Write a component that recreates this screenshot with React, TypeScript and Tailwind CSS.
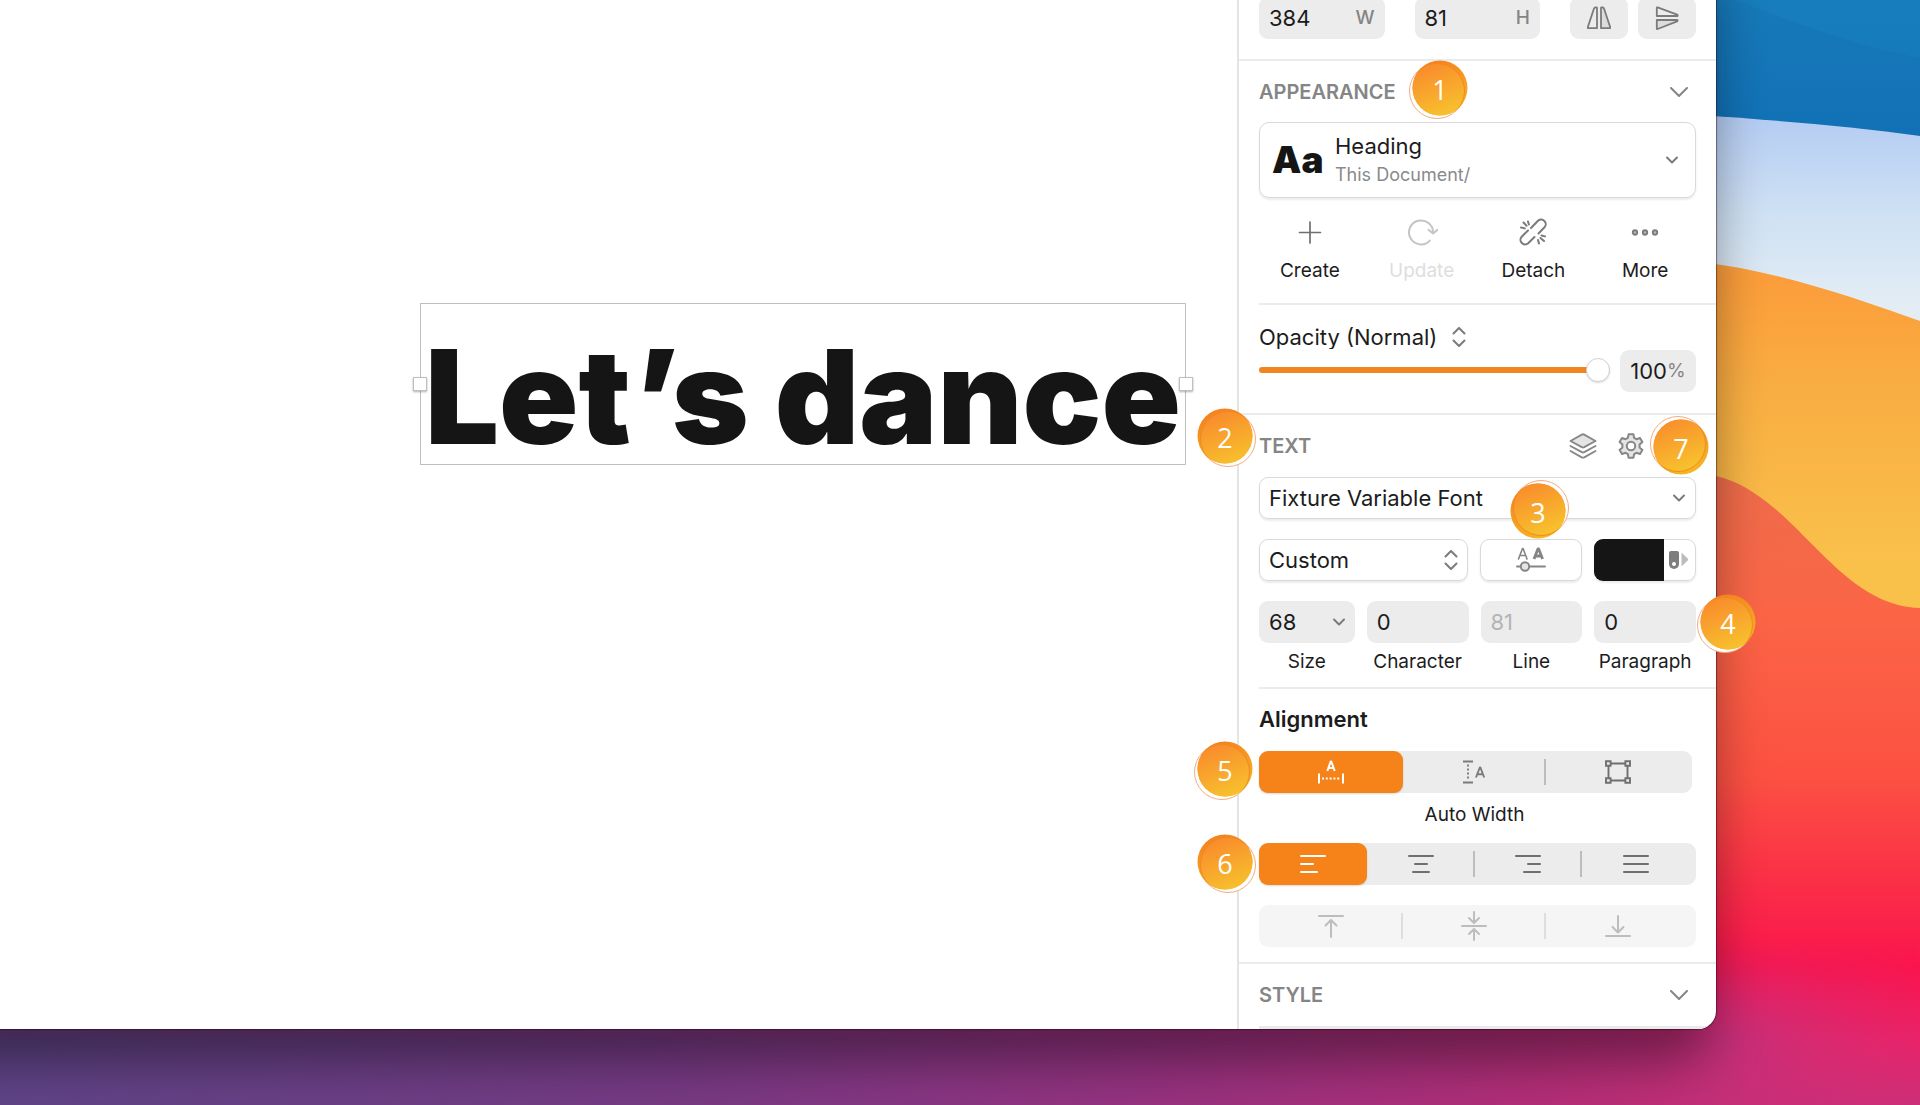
import { useState, ReactNode } from "react"

interface IconProps {
  className?: string
}

function Chevron({ className = "w-[18px] h-[10px]" }: IconProps) {
  return (
    <svg viewBox="0 0 18 10" className={className} fill="none" stroke="currentColor" strokeWidth="2" strokeLinecap="round" strokeLinejoin="round">
      <path d="M1 1l8 8 8-8" />
    </svg>
  )
}

function SmallChevron({ className = "" }: IconProps) {
  return (
    <svg viewBox="0 0 12 8" className={`w-3 h-2 ${className}`} fill="none" stroke="currentColor" strokeWidth="2" strokeLinecap="round" strokeLinejoin="round">
      <path d="M1 1.5l5 5 5-5" />
    </svg>
  )
}

function UpDown({ className = "" }: IconProps) {
  return (
    <svg viewBox="0 0 14 20" className={`w-[14px] h-5 ${className}`} fill="none" stroke="currentColor" strokeWidth="2" strokeLinecap="round" strokeLinejoin="round">
      <path d="M1.5 6.5L7 1l5.500 5.500M1.500 13.500L7 19l5.500-5.500" />
    </svg>
  )
}

function FlipHorizontal() {
  return (
    <svg viewBox="0 0 24 24" className="w-6 h-6" fill="none" stroke="#7b7b7b" strokeWidth="1.800" strokeLinejoin="round">
      <path d="M10 1.800v20.400H1.200c-.5 0-.6-.4-.5-.8L7 2.500c.4-1.200 3-1.500 3-.7z" />
      <path d="M14 1.800v20.400h8.800c.5 0 .6-.4.5-.8L17 2.500c-.4-1.200-3-1.500-3-.7z" fill="#dcdcdc" />
    </svg>
  )
}

function FlipVertical() {
  return (
    <svg viewBox="0 0 24 24" className="w-6 h-6" fill="none" stroke="#7b7b7b" strokeWidth="1.800" strokeLinejoin="round">
      <path d="M1.800 10h20.400c.7 0 .6-1-.1-1.300L2.600 1.300c-.6-.2-.8.100-.8.600z" />
      <path d="M1.800 14h20.400c.7 0 .6 1-.1 1.300L2.600 23c-.6.200-.8-.1-.8-.6z" fill="#dcdcdc" />
    </svg>
  )
}

function PlusIcon() {
  return (
    <svg viewBox="0 0 28 28" className="w-7 h-7" fill="none" stroke="#6f6f6f" strokeWidth="1.700" strokeLinecap="round">
      <path d="M14 4v21M3.500 14.500h21" />
    </svg>
  )
}

function UpdateIcon() {
  return (
    <svg viewBox="0 0 32 28" className="w-8 h-7" fill="none" stroke="#c4c4c4" strokeWidth="2" strokeLinecap="round" strokeLinejoin="round">
      <path d="M23.800 22.600A12 12 0 1 1 27 14.800M22.500 11.800l4.500 3.700 4.500-3.700" />
    </svg>
  )
}

function DetachIcon() {
  return (
    <svg viewBox="0 0 28 28" className="w-7 h-7" fill="none" stroke="#7b7b7b" strokeWidth="2" strokeLinecap="round" strokeLinejoin="round">
      <path d="M12 10l7-7.200a4.600 4.600 0 0 1 6.500 6.500l-6 6.200" />
      <path d="M9 12.500l-6.300 6.200a4.600 4.600 0 0 0 6.500 6.500L15.500 19" />
      <path d="M9 3.500l.9 3M4.500 4.500l3 3.200M2 9.500l3.800.9M19 22l1 3.500M21.500 20l3.500 3M22.500 17.500l3.500.9" />
    </svg>
  )
}

function MoreIcon() {
  return (
    <svg viewBox="0 0 28 28" className="w-7 h-7" fill="#b5b5b5" stroke="#7b7b7b" strokeWidth="1.900">
      <circle cx="4" cy="14.500" r="2.200" />
      <circle cx="14" cy="14.500" r="2.200" />
      <circle cx="24" cy="14.500" r="2.200" />
    </svg>
  )
}

function LayersIcon() {
  return (
    <svg viewBox="0 0 28 26" className="w-7 h-[26px]" fill="none" stroke="#878787" strokeWidth="1.900" strokeLinecap="round" strokeLinejoin="round">
      <path d="M1.500 8L12.800 1.600q1.200-.6 2.400 0L26.500 8l-11.300 6.200q-1.200.6-2.400 0z" fill="#e4e4e4" />
      <path d="M1.500 13l11.300 6.200q1.200.6 2.400 0L26.500 13M1.500 18l11.300 6.300q1.200.6 2.400 0L26.500 18" />
    </svg>
  )
}

function GearIcon() {
  return (
    <svg viewBox="0 0 26 26" className="w-[26px] h-[26px]" fill="#e4e4e4" stroke="#878787" strokeWidth="2" strokeLinejoin="round">
      <path d="M10.600 1.200h4.800l.7 3.600 2.400 1.400 3.500-1.200 2.400 4.100-2.800 2.500v2.800l2.800 2.500-2.400 4.100-3.500-1.200-2.400 1.400-.7 3.600h-4.800l-.7-3.600-2.400-1.400L4 21l-2.400-4.100 2.800-2.500v-2.800L1.600 9.100 4 5l3.500 1.200 2.400-1.400z" />
      <circle cx="13" cy="13" r="4.200" fill="#fff" />
    </svg>
  )
}

function VariableAxesIcon() {
  return (
    <svg viewBox="0 0 30 26" className="w-[30px] h-[26px]" fill="none" stroke="#858585" strokeLinecap="round" strokeLinejoin="round">
      <path d="M2.500 12L6.500 1.500h.6L11 12M4 8.500h5.600" strokeWidth="1.600" />
      <path d="M18 12L21.900 2h.8L26.600 12M19.600 9h5.500" strokeWidth="2.800" strokeLinecap="butt" />
      <path d="M1 19.500h28" strokeWidth="1.900" />
      <circle cx="9" cy="19.500" r="4.200" fill="#e4e4e4" strokeWidth="2" />
    </svg>
  )
}

function SwatchIcon() {
  return (
    <svg viewBox="0 0 20 18" className="w-5 h-[18px]">
      <path d="M0 2a2 2 0 0 1 2-2h6a2 2 0 0 1 2 2v11a5 5 0 0 1-10 0z" fill="#7e7e7e" />
      <circle cx="5" cy="13" r="2" fill="#fff" />
      <path d="M12.500 1.500l6.200 6q1 1 0 2l-6.200 6z" fill="#bcbcbc" />
    </svg>
  )
}

function AutoWidthIcon() {
  return (
    <svg viewBox="0 0 26 24" className="w-[26px] h-6" fill="none" stroke="#fff" strokeWidth="2" strokeLinejoin="round">
      <path d="M9.300 11L12.700 1.500h.6l3.400 9.500M10.500 8h5" />
      <path d="M1 13.500v10M25 13.500v10" />
      <path d="M4 18.500h19" strokeDasharray="2 1.800" />
    </svg>
  )
}

function AutoHeightIcon() {
  return (
    <svg viewBox="0 0 22 24" className="w-[22px] h-6" fill="none" stroke="#7b7b7b" strokeWidth="1.900" strokeLinejoin="round">
      <path d="M0 1.500h10M0 22.500h10" />
      <path d="M5 4.500v16" strokeDasharray="2 2" />
      <path d="M13 17.500L16.800 7.500h.6l3.800 10M14.300 14.200h5.600" />
    </svg>
  )
}

function FixedSizeIcon() {
  return (
    <svg viewBox="0 0 26 24" className="w-[26px] h-6" fill="none" stroke="#6f6f6f" strokeWidth="1.900">
      <path d="M5.500 3.500h15M5.500 20.500h15M3.500 5.500v13M22.500 5.500v13" />
      <path d="M1 1.200h4.600v4.600H1zM20.400 1.200H25v4.600h-4.600zM1 18.200h4.600v4.600H1zM20.400 18.200H25v4.600h-4.600z" />
    </svg>
  )
}

function LinesIcon({ d }: { d: string }) {
  return (
    <svg viewBox="0 0 26 20" className="w-[26px] h-5" fill="none" stroke="currentColor" strokeWidth="2" strokeLinecap="round">
      <path d={d} />
    </svg>
  )
}

function VerticalIcon({ d }: { d: string }) {
  return (
    <svg viewBox="0 0 26 30" className="w-[26px] h-[30px]" fill="none" stroke="#bdbdbd" strokeWidth="2" strokeLinecap="round" strokeLinejoin="round">
      <path d={d} />
    </svg>
  )
}

const horizontalOptions = [
  { label: "Left", d: "M1 2h24M1 10h12M1 18h16" },
  { label: "Center", d: "M1 2h24M7 10h12M5 18h16" },
  { label: "Right", d: "M1 2h24M13 10h12M9 18h16" },
  { label: "Justify", d: "M1 2h24M1 10h24M1 18h24" },
]

const verticalOptions = [
  { label: "Top", d: "M1 5h24M13 26V9M7.500 14.500L13 9l5.500 5.500" },
  { label: "Middle", d: "M1 15h24M13 1v10.500M8 7l5 5 5-5M13 29V18.500M8 23l5-5 5 5" },
  { label: "Bottom", d: "M1 25h24M13 5v16.500M7.500 16l5.500 5.500 5.500-5.500" },
]

// the ring peeks out on a different side of each pin
const pins = [
  { n: 1, place: "top-[56px] right-[244px]", ring: [-3, 3] },
  { n: 2, place: "top-[404px] right-[459px]", ring: [3, 3] },
  { n: 3, place: "top-[479px] right-[146px]", ring: [3, -3] },
  { n: 4, place: "top-[590px] -right-[44px]", ring: [-3, 3] },
  { n: 5, place: "top-[737px] right-[459px]", ring: [-3, 3] },
  { n: 6, place: "top-[830px] right-[459px]", ring: [3, 3] },
  { n: 7, place: "top-[415px] right-[3px]", ring: [-3, -3] },
]

interface PinProps {
  n: number
  place: string
  ring: number[]
}

function Pin({ n, place, ring }: PinProps) {
  return (
    <div className={`absolute ${place} w-16 h-16 flex items-center justify-center`}>
      <svg viewBox="0 0 64 64" className="absolute inset-0 w-16 h-16">
        <defs>
          <linearGradient id={`pin${n}`} x1="0.3" y1="0" x2="0.7" y2="1">
            <stop offset="0" stopColor="#f98a2c" />
            <stop offset="1" stopColor="#f7c52d" />
          </linearGradient>
          <linearGradient id={`rim${n}`} x1="0.3" y1="0" x2="0.7" y2="1">
            <stop offset="0" stopColor="#f5801f" />
            <stop offset="1" stopColor="#f6b822" />
          </linearGradient>
          <clipPath id={`clip${n}`}>
            <circle cx="32" cy="32" r="27.500" />
          </clipPath>
        </defs>
        <circle cx={32 + ring[0]} cy={32 + ring[1]} r="27.500" fill="#fff" stroke="#f3ab80" strokeWidth="1" />
        <circle cx="32" cy="32" r="27.500" fill={`url(#rim${n})`} />
        <circle cx={32 + ring[0]} cy={32 + ring[1]} r="27.500" fill={`url(#pin${n})`} stroke="#ee8a22" strokeWidth="1" clipPath={`url(#clip${n})`} />
      </svg>
      <span className="relative pt-1 font-['Open_Sans'] text-[27px] leading-8 text-white">{n}</span>
    </div>
  )
}

function Wallpaper() {
  return (
    <svg viewBox="0 0 1920 1105" preserveAspectRatio="xMaxYMax slice" className="absolute inset-0 w-full h-full" aria-hidden="true">
      <defs>
        <linearGradient id="sky" x1="0" y1="0" x2="0" y2="1">
          <stop offset="0" stopColor="#1779b9" />
          <stop offset="1" stopColor="#0f6db4" />
        </linearGradient>
        <linearGradient id="mist" gradientUnits="userSpaceOnUse" x1="0" y1="120" x2="0" y2="310">
          <stop offset="0" stopColor="#b5cdf3" />
          <stop offset="0.500" stopColor="#cfe1f4" />
          <stop offset="1" stopColor="#e4edf4" />
        </linearGradient>
        <linearGradient id="sand" gradientUnits="userSpaceOnUse" x1="0" y1="280" x2="0" y2="560">
          <stop offset="0" stopColor="#fb9d3b" />
          <stop offset="0.400" stopColor="#f9ae42" />
          <stop offset="1" stopColor="#f9c04a" />
        </linearGradient>
        <linearGradient id="fire" gradientUnits="userSpaceOnUse" x1="0" y1="480" x2="0" y2="1105">
          <stop offset="0" stopColor="#ee6c4a" />
          <stop offset="0.220" stopColor="#fb6546" />
          <stop offset="0.480" stopColor="#fc5042" />
          <stop offset="0.620" stopColor="#fb3346" />
          <stop offset="0.780" stopColor="#fa154e" />
          <stop offset="0.900" stopColor="#e8246a" />
          <stop offset="1" stopColor="#cb2f78" />
        </linearGradient>
        <linearGradient id="dusk" x1="0" y1="0" x2="1" y2="0">
          <stop offset="0" stopColor="#5f4487" />
          <stop offset="0.350" stopColor="#773a84" />
          <stop offset="0.600" stopColor="#973280" />
          <stop offset="0.800" stopColor="#b32e78" />
          <stop offset="0.900" stopColor="#c42f78" />
          <stop offset="1" stopColor="#d22e74" stopOpacity="0" />
        </linearGradient>
        <linearGradient id="fade" gradientUnits="userSpaceOnUse" x1="0" y1="940" x2="0" y2="1040">
          <stop offset="0" stopColor="#000" />
          <stop offset="1" stopColor="#fff" />
        </linearGradient>
        <mask id="fadeMask">
          <rect y="930" width="1920" height="175" fill="url(#fade)" />
        </mask>
      </defs>
      <rect width="1920" height="200" fill="url(#sky)" />
      <path d="M1735 0C1790 20 1850 45 1920 58V0z" fill="#1a84c0" opacity="0.400" />
      <path d="M1700 115C1770 120 1850 126 1920 136V340H1700z" fill="url(#mist)" />
      <path d="M1700 262C1780 271 1860 300 1920 321V640H1700z" fill="url(#sand)" />
      <path d="M0 476H1716C1795 494 1835 606 1920 608V1105H0z" fill="url(#fire)" />
      <rect y="930" width="1920" height="175" fill="url(#dusk)" mask="url(#fadeMask)" />
    </svg>
  )
}

interface NumberFieldProps {
  id: string
  label: string
  value: string
  placeholder?: string
  chevron?: boolean
}

function NumberField({ id, label, value, placeholder, chevron }: NumberFieldProps) {
  return (
    <div className="flex flex-col">
      <div className="relative h-[42px]">
        <input
          id={id}
          defaultValue={value}
          placeholder={placeholder}
          className="w-full h-full px-[10px] rounded-[9px] bg-[#ececec] text-[22px] placeholder:text-[#b4b4b4]"
        />
        {chevron && (
          <button type="button" aria-label="Size presets" className="absolute right-[10px] inset-y-0 text-[#7b7b7b]">
            <SmallChevron />
          </button>
        )}
      </div>
      <label htmlFor={id} className="mt-[7px] text-center text-[19px] leading-6">{label}</label>
    </div>
  )
}

interface ActionProps {
  label: string
  disabled?: boolean
  children: ReactNode
}

function Action({ label, disabled, children }: ActionProps) {
  return (
    <button type="button" disabled={disabled} className={`flex flex-col items-center gap-[13px] text-[19px] leading-6 ${disabled ? "text-[#dedede]" : ""}`}>
      {children}
      {label}
    </button>
  )
}

function Inspector() {
  const [resize, setResize] = useState(0)
  const [align, setAlign] = useState(0)
  const [opacity, setOpacity] = useState(100)

  const resizeOptions = [
    { label: "Auto Width", icon: <AutoWidthIcon /> },
    { label: "Auto Height", icon: <AutoHeightIcon /> },
    { label: "Fixed Size", icon: <FixedSizeIcon /> },
  ]

  return (
    <aside className="w-[479px] shrink-0 overflow-hidden rounded-br-[18px] border-l-2 border-[#e4e4e4]">
      <section className="-mt-[3px] px-5 pb-5 border-b-2 border-[#ebebeb] flex">
        <div className="flex flex-1 gap-[30px]">
          <div className="relative flex-1 h-[42px]">
            <input id="width" defaultValue="384" className="w-full h-full px-[10px] rounded-[9px] bg-[#ececec] text-[22px]" />
            <label htmlFor="width" className="absolute right-[10px] top-[9px] text-[19px] leading-6 font-medium text-[#858585]">W</label>
          </div>
          <div className="relative flex-1 h-[42px]">
            <input id="height" defaultValue="81" className="w-full h-full px-[10px] rounded-[9px] bg-[#ececec] text-[22px]" />
            <label htmlFor="height" className="absolute right-[10px] top-[9px] text-[19px] leading-6 font-medium text-[#858585]">H</label>
          </div>
        </div>
        <div className="ml-[30px] flex gap-[10px]">
          <button type="button" aria-label="Flip horizontal" className="w-[58px] h-[42px] rounded-[9px] bg-[#ececec] flex items-center justify-center">
            <FlipHorizontal />
          </button>
          <button type="button" aria-label="Flip vertical" className="w-[58px] h-[42px] rounded-[9px] bg-[#ececec] flex items-center justify-center">
            <FlipVertical />
          </button>
        </div>
      </section>

      <section>
        <div className="h-[61px] pl-5 pr-7 flex items-center justify-between text-[#858585]">
          <h2 className="text-[20px] leading-6 font-semibold">APPEARANCE</h2>
          <button type="button" aria-label="Collapse appearance"><Chevron /></button>
        </div>
        <div className="px-5">
          <button type="button" className="w-full h-[76px] pl-3 pr-[17px] rounded-[10px] border border-[#d9d9d9] shadow-[0_2px_2px_rgba(0,0,0,0.08)] flex items-center text-left">
            <span className="w-[63px] text-[37px] font-black text-[#151515]">Aa</span>
            <span className="flex-1 flex flex-col gap-[5px]">
              <span className="text-[22px] leading-6">Heading</span>
              <span className="text-[18px] leading-6 text-[#8a8a8a]">This Document/</span>
            </span>
            <SmallChevron className="text-[#7b7b7b]" />
          </button>
        </div>
        <div className="ml-5 pt-5 pb-5 border-b-2 border-[#ebebeb]">
          <div className="-ml-[5px] mr-[15px] grid grid-cols-4">
            <Action label="Create"><PlusIcon /></Action>
            <Action label="Update" disabled><UpdateIcon /></Action>
            <Action label="Detach"><DetachIcon /></Action>
            <Action label="More"><MoreIcon /></Action>
          </div>
        </div>
      </section>

      <section className="px-5 pt-5 pb-[21px] border-b-2 border-[#ebebeb] flex items-end gap-[10px]">
        <div className="flex-1 pb-[11px]">
          <div className="relative inline-flex items-center h-6">
            <select aria-label="Blend mode" className="appearance-none pr-7 text-[22px] leading-6">
              <option>Opacity (Normal)</option>
            </select>
            <UpDown className="absolute right-0 pointer-events-none text-[#7b7b7b]" />
          </div>
          <div className="mt-[7px] h-[23px] flex items-center">
            <input
              type="range"
              aria-label="Opacity"
              value={opacity}
              onChange={(e) => setOpacity(Number(e.target.value))}
              className="w-full h-6 appearance-none bg-transparent [&::-webkit-slider-runnable-track]:h-[6px] [&::-webkit-slider-runnable-track]:rounded-full [&::-webkit-slider-runnable-track]:bg-[#f0861f] [&::-webkit-slider-thumb]:appearance-none [&::-webkit-slider-thumb]:w-6 [&::-webkit-slider-thumb]:h-6 [&::-webkit-slider-thumb]:-mt-[9px] [&::-webkit-slider-thumb]:rounded-full [&::-webkit-slider-thumb]:bg-white [&::-webkit-slider-thumb]:border [&::-webkit-slider-thumb]:border-[#d2d2d2] [&::-webkit-slider-thumb]:shadow-[0_1px_2px_rgba(0,0,0,0.15)]"
            />
          </div>
        </div>
        <div className="w-[76px] h-[42px] rounded-[9px] bg-[#ececec] flex items-center justify-center">
          <input id="opacity" value={opacity} onChange={(e) => setOpacity(Number(e.target.value))} className="field-sizing-content bg-transparent text-[22px]" />
          <label htmlFor="opacity" className="text-[19px] text-[#858585]">%</label>
        </div>
      </section>

      <section>
        <div className="h-[62px] pl-5 pr-[72px] flex items-center gap-[21px] text-[#858585]">
          <h2 className="flex-1 text-[20px] leading-6 font-semibold">TEXT</h2>
          <button type="button" aria-label="Text styles"><LayersIcon /></button>
          <button type="button" aria-label="Text options"><GearIcon /></button>
        </div>
        <div className="px-5 flex flex-col gap-5">
          <div className="relative h-[42px]">
            <select aria-label="Font" className="appearance-none w-full h-full px-[9px] rounded-[9px] border border-[#d9d9d9] shadow-[0_2px_2px_rgba(0,0,0,0.08)] text-[22px]">
              <option>Fixture Variable Font</option>
            </select>
            <SmallChevron className="absolute right-[11px] top-[17px] pointer-events-none text-[#7b7b7b]" />
          </div>
          <div className="grid grid-cols-[210fr_102fr_102fr] gap-3">
            <div className="relative h-[42px]">
              <select aria-label="Weight" className="appearance-none w-full h-full px-[9px] rounded-[9px] border border-[#d9d9d9] shadow-[0_2px_2px_rgba(0,0,0,0.08)] text-[22px]">
                <option>Custom</option>
              </select>
              <UpDown className="absolute right-[10px] top-[11px] pointer-events-none text-[#7b7b7b]" />
            </div>
            <button type="button" aria-label="Variable axes" className="rounded-[9px] border border-[#d9d9d9] shadow-[0_2px_2px_rgba(0,0,0,0.08)] flex items-center justify-center">
              <VariableAxesIcon />
            </button>
            <div className="rounded-[9px] border border-[#d9d9d9] shadow-[0_2px_2px_rgba(0,0,0,0.08)] flex">
              <button type="button" aria-label="Text color" className="-m-px w-[70px] rounded-l-[9px] bg-[#151515]"></button>
              <button type="button" aria-label="Color variables" className="flex-1 flex items-center justify-center">
                <SwatchIcon />
              </button>
            </div>
          </div>
          <div className="grid grid-cols-[96fr_102fr_102fr_102fr] gap-3">
            <NumberField id="size" label="Size" value="68" chevron />
            <NumberField id="character" label="Character" value="0" />
            <NumberField id="line" label="Line" value="" placeholder="81" />
            <NumberField id="paragraph" label="Paragraph" value="0" />
          </div>
        </div>
        <div className="ml-5 mt-[13px] border-b-2 border-[#ebebeb]"></div>
      </section>

      <section className="px-5 pt-[18px] pb-[15px] border-b-2 border-[#ebebeb]">
        <h3 className="text-[22px] leading-6 font-semibold">Alignment</h3>
        <div className="mt-5 mr-1 pr-[2px] h-[42px] rounded-[9px] bg-[#ececec] grid grid-cols-3">
          {resizeOptions.map((o, i) => (
            <button
              key={o.label}
              type="button"
              aria-label={o.label}
              aria-pressed={resize === i}
              onClick={() => setResize(i)}
              className={`relative flex items-center justify-center ${resize === i ? "rounded-[9px] bg-[#f6821a] shadow-[0_1px_2px_rgba(0,0,0,0.15)]" : ""}`}
            >
              {o.icon}
              {i === 1 && <span className="absolute right-0 top-2 h-[26px] w-[2px] bg-[#bdbdbd]"></span>}
            </button>
          ))}
        </div>
        <p className="mt-[10px] text-center text-[19px] leading-6 pr-[6px]">{resizeOptions[resize].label}</p>
        <div className="mt-4 pr-[6px] h-[42px] rounded-[9px] bg-[#ececec] grid grid-cols-4">
          {horizontalOptions.map((o, i) => (
            <button
              key={o.label}
              type="button"
              aria-label={o.label}
              aria-pressed={align === i}
              onClick={() => setAlign(i)}
              className={`relative flex items-center justify-center ${align === i ? "rounded-[9px] bg-[#f6821a] text-white shadow-[0_1px_2px_rgba(0,0,0,0.15)]" : "text-[#6f6f6f]"}`}
            >
              <LinesIcon d={o.d} />
              {(i === 1 || i === 2) && <span className="absolute right-0 top-2 h-[26px] w-[2px] bg-[#bdbdbd]"></span>}
            </button>
          ))}
        </div>
        <div className="mt-5 pr-[6px] h-[42px] rounded-[9px] bg-[#f5f5f5] grid grid-cols-3">
          {verticalOptions.map((o, i) => (
            <button key={o.label} type="button" disabled aria-label={o.label} className="relative flex items-center justify-center">
              <VerticalIcon d={o.d} />
              {i < 2 && <span className="absolute right-0 top-2 h-[26px] w-[2px] bg-[#dedede]"></span>}
            </button>
          ))}
        </div>
      </section>

      <section>
        <div className="h-[62px] pl-5 pr-7 flex items-center justify-between text-[#858585]">
          <h2 className="text-[20px] leading-6 font-semibold">STYLE</h2>
          <button type="button" aria-label="Expand style"><Chevron /></button>
        </div>
        <div className="ml-5 h-[3px] bg-[#e9ebea]"></div>
      </section>
    </aside>
  )
}

function Canvas() {
  return (
    <main className="flex-1 flex justify-end">
      <div className="relative mt-[303px] mr-[51px] w-[766px] h-[162px] border border-[#bfbfbf] flex items-end justify-center">
        <p className="whitespace-nowrap text-[131px] leading-[134px] font-black text-[#151515]">Let’s dance</p>
        <span className="absolute -left-[8px] top-[73px] w-[14px] h-[14px] border border-[#bfbfbf] bg-white shadow-[0_1px_2px_rgba(0,0,0,0.3)]"></span>
        <span className="absolute -right-[8px] top-[73px] w-[14px] h-[14px] border border-[#bfbfbf] bg-white shadow-[0_1px_2px_rgba(0,0,0,0.3)]"></span>
      </div>
    </main>
  )
}

export default function App() {
  return (
    <div className="relative min-h-screen flow-root overflow-hidden font-['Inter',sans-serif] text-[#1c1c1c]">
      <Wallpaper />
      <div className="relative mr-[204px] mb-[75px]">
        <div className="flex rounded-br-[18px] bg-white shadow-[0_0_1px_1px_rgba(30,0,30,0.45),-28px_8px_50px_26px_rgba(0,0,0,0.4)]">
          <Canvas />
          <Inspector />
        </div>
        {pins.map((p) => (
          <Pin key={p.n} n={p.n} place={p.place} ring={p.ring} />
        ))}
      </div>
    </div>
  )
}
